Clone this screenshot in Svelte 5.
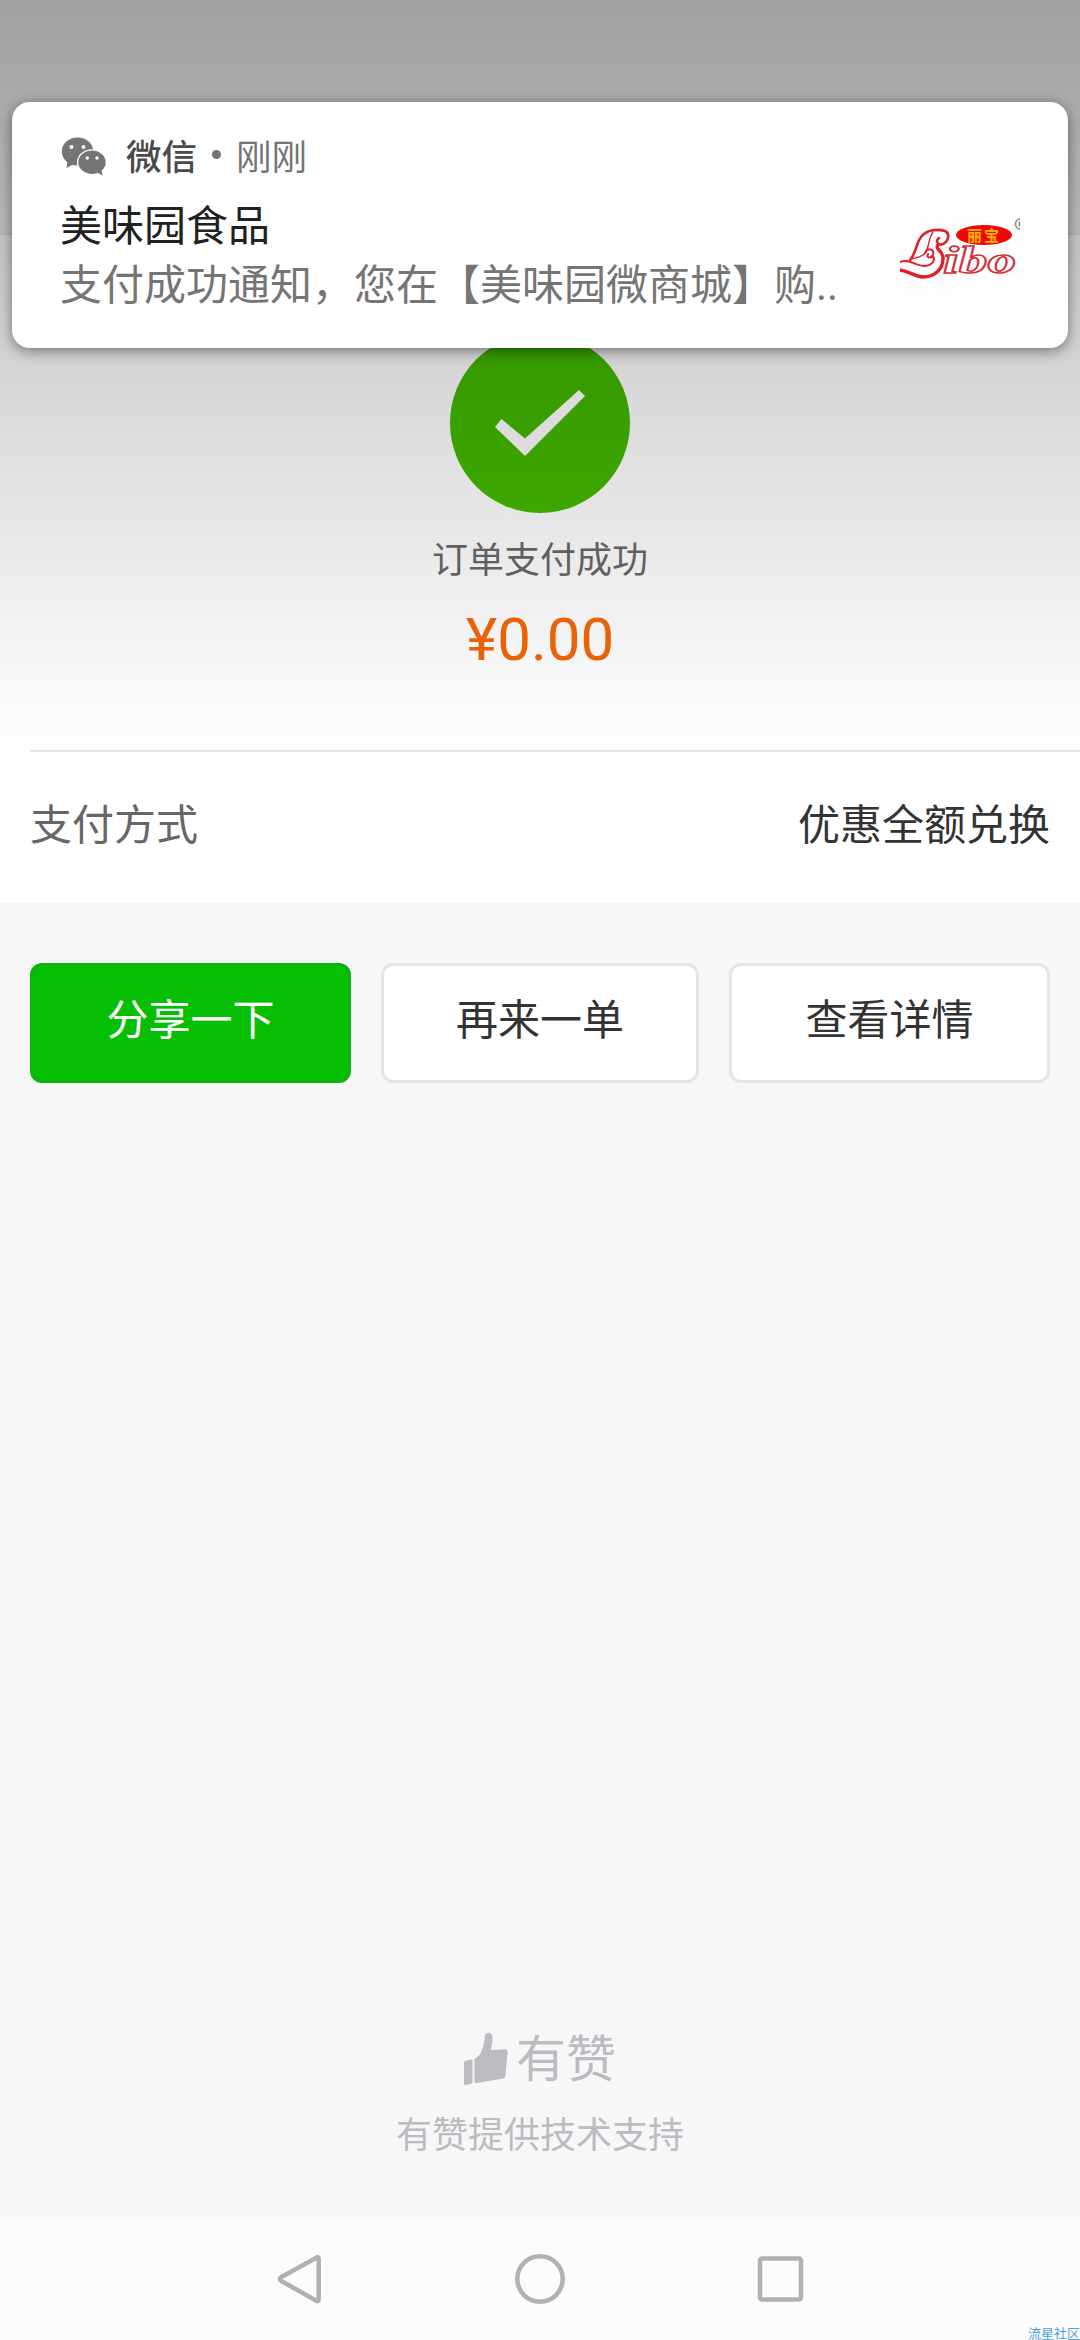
<script lang="ts">
    const notice = {
        app: "微信",
        time: "刚刚",
        title: "美味园食品",
        body: "支付成功通知，您在【美味园微商城】购..",
    };

    const actions = [
        { label: "分享一下", primary: true },
        { label: "再来一单", primary: false },
        { label: "查看详情", primary: false },
    ];
</script>

<div class="screen">
    <header class="topbar"></header>

    <section class="result">
        <svg class="check" viewBox="0 0 180 180">
            <circle cx="90" cy="90" r="90" fill="url(#green)" />
            <path d="M45 94 51.5 86 75 105.5 129 57 135 63 75 123Z" fill="#dcdcdc" />
            <defs>
                <linearGradient id="green" x1="0" y1="0" x2="0" y2="1">
                    <stop offset="0" stop-color="#369700" />
                    <stop offset="1" stop-color="#3da700" />
                </linearGradient>
            </defs>
        </svg>
        <p class="status">订单支付成功</p>
        <p class="amount">¥0.00</p>
    </section>

    <section class="method">
        <span class="label">支付方式</span>
        <span class="value">优惠全额兑换</span>
    </section>

    <div class="actions">
        {#each actions as action}
            <button class:primary={action.primary}>{action.label}</button>
        {/each}
    </div>

    <footer class="support">
        <div class="brand">
            <svg class="thumb" viewBox="0 0 44 54">
                <path d="M2 28.5 8.5 27.3V51.5L2 53Q0 53.3 0 51.5V30.5Q0 28.8 2 28.5Z" />
                <path
                    d="M10.5 26.7C17 25 20.5 13 20.8 4.5C21 -.5 28.5 -.5 28.5 5C28.5 10 27.5 14 27 18L41 17.3Q43.6 17.3 43.5 20L41.500 43.5Q41.3 46 39 46.5L11.5 51.3Q10.5 51.3 10.5 50Z"
                />
            </svg>
            <span>有赞</span>
        </div>
        <p>有赞提供技术支持</p>
    </footer>

    <nav class="navbar">
        <svg viewBox="0 0 50 50"><path d="M41 4Q43.700 1.500 43.700 5V45Q43.700 48.500 41 46.500L6.300 27Q3.500 25 6.300 23Z" /></svg>
        <svg viewBox="0 0 50 50"><circle cx="25" cy="25" r="22.7" /></svg>
        <svg viewBox="0 0 50 50"><rect x="5" y="4.5" width="41" height="41" rx="2" /></svg>
    </nav>

    <div class="notice">
        <div class="notice-text">
            <div class="notice-head">
                <svg class="wechat" viewBox="0 0 46 40">
                    <ellipse cx="17.500" cy="14.5" rx="15.7" ry="14" />
                    <path d="M7.500 24 6.500 31 14 27Z" />
                    <ellipse class="gap" cx="32" cy="25.2" rx="15" ry="13" />
                    <ellipse cx="32" cy="25.2" rx="13.7" ry="11.7" />
                    <path d="M36 35 42.5 38.5 41.5 33Z" />
                    <g class="eyes">
                        <circle cx="11.5" cy="10" r="2" />
                        <circle cx="23.5" cy="10" r="2" />
                        <circle cx="27.3" cy="21" r="1.7" />
                        <circle cx="37" cy="21" r="1.7" />
                    </g>
                </svg>
                <b>{notice.app}</b>
                <i class="dot"></i>
                <span>{notice.time}</span>
            </div>
            <h1>{notice.title}</h1>
            <p>{notice.body}</p>
        </div>
        <svg class="shop-logo" viewBox="0 0 120 120">
            <rect width="120" height="120" fill="#fefefe" />
            <g class="swash">
                <path d="M10 64C17 56 15 49 21 41C27 33 38 33 45 35C50 37 49 45 43 48C38 50 35 45 39 42" stroke-width="2.6" />
                <path d="M33 36C28 43 30 50 25 57C20 63 14 61 10 64" stroke-width="1.3" />
                <path d="M25 57C28 51 35 53 33 59C31 63 26 62 28 58" stroke-width="2" />
                <path d="M38 49C34 53 43 54 43 62C43 74 34 81 23 81C13 80 9 75 0 74" stroke-width="3.4" />
                <path d="M0 66C8 62 16 70 25 70C34 69 36 62 32 60" stroke-width="2" />
            </g>
            <text class="script" x="43" y="77" textLength="73" lengthAdjust="spacingAndGlyphs">ibo</text>
            <ellipse cx="84" cy="39" rx="28" ry="10" fill="#f00808" />
            <text class="seal" x="67" y="44.500">丽宝</text>
            <ellipse class="reg" cx="120" cy="28" rx="4.500" ry="5" />
            <path class="reg" d="M119.300 25.500V30.500" />
        </svg>
    </div>

    <span class="watermark">流星社区</span>
</div>

<style>
    :global(body) {
        margin: 0;
    }

    .screen {
        position: relative;
        width: 1080px;
        height: 2340px;
        overflow: hidden;
        display: flex;
        flex-direction: column;
        background: #f7f7f7;
        font-family: Roboto, "Noto Sans CJK SC", sans-serif;
        font-weight: 400;
        color: #333;
    }

    p,
    h1 {
        margin: 0;
        font-weight: 400;
    }

    .topbar {
        box-sizing: border-box;
        height: 235px;
        background: linear-gradient(#a1a1a1, #ababab 45%, #b9b9b9);
        border-bottom: 2px solid #b2b2b2;
    }

    .result {
        box-sizing: border-box;
        height: 515px;
        padding-top: 98px;
        display: flex;
        flex-direction: column;
        align-items: center;
        background: linear-gradient(#c5c5c5, #d5d5d5 26%, #dedede 40%, #ececec 65%, #f9f9f9 88%, #fefefe);
    }

    .check {
        width: 180px;
        height: 180px;
    }

    .status {
        margin-top: 21px;
        font-size: 36px;
        line-height: 54px;
        color: #606060;
    }

    .amount {
        margin-top: 16px;
        font-size: 60px;
        line-height: 72px;
        color: #ea6208;
    }

    .method {
        box-sizing: border-box;
        height: 153px;
        padding: 0 30px 10px;
        display: flex;
        align-items: center;
        justify-content: space-between;
        background: linear-gradient(#e5e5e5, #e5e5e5) 30px 0 / 100% 2px no-repeat #fff;
        font-size: 42px;
    }

    .label {
        color: #666;
    }

    .actions {
        display: grid;
        grid-template-columns: 321px 318px 321px;
        gap: 30px;
        padding: 60px 30px 0;
    }

    button {
        box-sizing: border-box;
        height: 120px;
        padding: 0 0 13px;
        border: 3px solid #e5e5e5;
        border-radius: 12px;
        background: #fff;
        font: inherit;
        font-size: 42px;
        color: #333;
    }

    button.primary {
        background: #06bf04;
        border-color: #0cb40c;
        color: #fff;
    }

    .support {
        margin-top: auto;
        padding-bottom: 54px;
        display: flex;
        flex-direction: column;
        align-items: center;
        color: #bbbbc1;
        font-size: 36px;
        line-height: 54px;
    }

    .brand {
        display: flex;
        align-items: center;
        gap: 8px;
        height: 60px;
        margin-bottom: 19px;
        font-size: 50px;
    }

    .thumb {
        width: 44px;
        height: 54px;
        margin-bottom: 3px;
        fill: #bbbbc1;
    }

    .navbar {
        box-sizing: border-box;
        height: 123px;
        padding: 0 275px;
        display: flex;
        align-items: center;
        justify-content: space-between;
        background: #fcfcfc;
    }

    .navbar svg {
        width: 50px;
        height: 50px;
        fill: none;
        stroke: #b1b1b1;
        stroke-width: 4.5;
        stroke-linejoin: round;
    }

    .notice {
        position: absolute;
        top: 102px;
        left: 12px;
        box-sizing: border-box;
        width: 1056px;
        height: 246px;
        padding: 0 48px;
        display: flex;
        justify-content: space-between;
        border-radius: 18px;
        background: #fff;
        box-shadow: 0 3px 14px rgba(0, 0, 0, 0.45);
    }

    .notice-text {
        padding-top: 26px;
        white-space: nowrap;
    }

    .notice-head {
        display: flex;
        align-items: center;
        height: 52px;
        font-size: 35.5px;
        color: #757575;
    }

    .notice-head b {
        margin-left: 20px;
        font-weight: 500;
        color: #4a4a4a;
    }

    .dot {
        width: 9px;
        height: 9px;
        margin: 0 15px;
        border-radius: 50%;
        background: #757575;
    }

    .wechat {
        width: 46px;
        height: 40px;
        margin-top: 5px;
        fill: #757575;
    }

    .wechat .gap,
    .wechat .eyes {
        fill: #fff;
    }

    .notice h1 {
        margin-top: 17px;
        font-size: 42px;
        line-height: 60px;
        color: #212121;
    }

    .notice p {
        font-size: 42px;
        line-height: 58px;
        color: #757575;
    }

    .shop-logo {
        width: 120px;
        height: 120px;
        margin-top: 94px;
    }

    .swash path {
        fill: none;
        stroke: #df2029;
        stroke-linecap: round;
    }

    .script {
        font: italic 700 38px "Liberation Serif", serif;
        fill: #fff;
        stroke: #d3303b;
        stroke-width: 1.5;
    }

    .seal {
        font-size: 15px;
        font-weight: 700;
        letter-spacing: 2px;
        fill: #ffb300;
    }

    .reg {
        fill: none;
        stroke: #888;
        stroke-width: 1.5;
    }

    .watermark {
        position: absolute;
        left: 1028px;
        bottom: -3px;
        font-size: 13px;
        line-height: 18px;
        white-space: nowrap;
        color: #4d9fe0;
    }
</style>
